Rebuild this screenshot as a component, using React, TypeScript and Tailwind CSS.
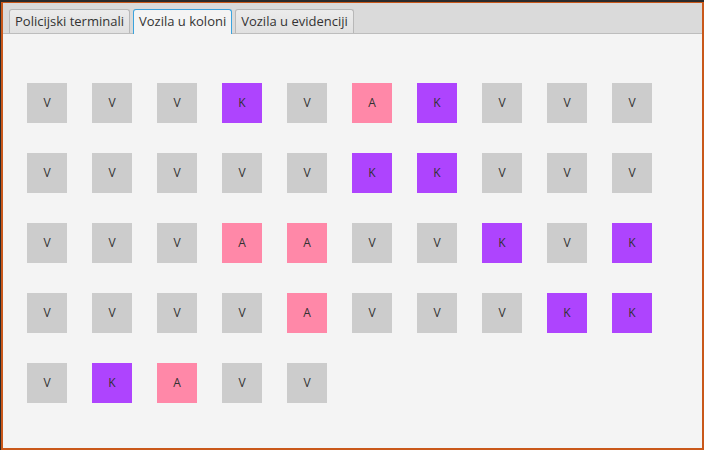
import React from 'react';

// kolona vozila: V = vozilo, K = kamion, A = autobus
const rows = [
  'VVVKVAKVVV',
  'VVVVVKKVVV',
  'VVVAAVVKVK',
  'VVVVAVVVKK',
  'VKAVV',
];

const colors: Record<string, string> = {
  V: 'bg-[#cccccc]',
  K: 'bg-[#ae44fe]',
  A: 'bg-[#ff88a8]',
};

function Tab({ label, active }: { label: string; active?: boolean }) {
  return (
    <div
      className={
        active
          ? 'h-[25px] px-[5px] flex items-center rounded-t-[3px] border border-b-0 border-[#3ba3dd] bg-[#f4f4f4] -mb-px'
          : 'h-[24px] px-[5px] flex items-center rounded-t-[3px] border border-b-0 border-[#b8b8b8] bg-gradient-to-b from-[#ececec] to-[#e0e0e0]'
      }
    >
      <span className="text-[13px] text-[#333333]">{label}</span>
    </div>
  );
}

export default function App() {
  return (
    <div
      className="w-[704px] h-[450px] bg-[#2b2b2b] pt-[2px] pl-[1px] flex"
      style={{ fontFamily: '"Open Sans", "Noto Sans", sans-serif' }}
    >
      <div className="flex-1 flex flex-col border-t border-l-2 border-r-2 border-b-2 border-[#c9581a] bg-[#f4f4f4]">
        {/* TABOVI */}
        <div className="h-[31px] bg-[#dadada] border-b border-[#bdbdbd] flex items-end gap-[3px] pl-[6px]">
          <Tab label="Policijski terminali" />
          <Tab label="Vozila u koloni" active />
          <Tab label="Vozila u evidenciji" />
        </div>

        {/* KOLONA */}
        <div className="flex flex-col gap-[30px] pt-[49px] pl-[24px]">
          {rows.map((row, i) => (
            <div key={i} className="flex gap-[25px]">
              {row.split('').map((c, j) => (
                <div
                  key={j}
                  className={`w-[40px] h-[40px] flex items-center justify-center ${colors[c]}`}
                >
                  <span className="text-[12px] text-[#333333]">{c}</span>
                </div>
              ))}
            </div>
          ))}
        </div>
      </div>
    </div>
  );
}
